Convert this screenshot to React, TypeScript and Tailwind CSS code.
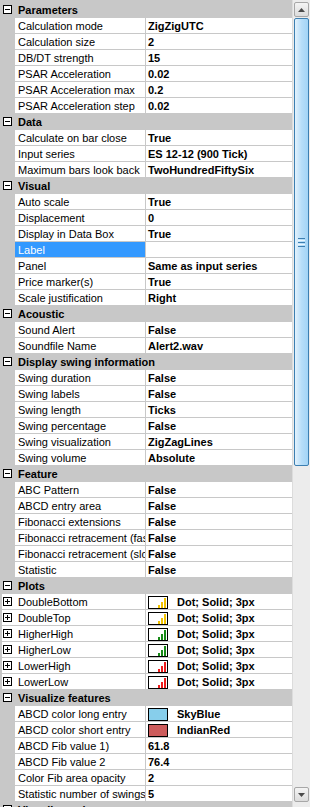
import React from 'react';

type Prop = {
  name: string;
  value?: string;
  plot?: string;
  color?: string;
  selected?: boolean;
};

type Category = { title: string; props: Prop[] };

const categories: Category[] = [
  {
    title: 'Parameters',
    props: [
      { name: 'Calculation mode', value: 'ZigZigUTC' },
      { name: 'Calculation size', value: '2' },
      { name: 'DB/DT strength', value: '15' },
      { name: 'PSAR Acceleration', value: '0.02' },
      { name: 'PSAR Acceleration max', value: '0.2' },
      { name: 'PSAR Acceleration step', value: '0.02' },
    ],
  },
  {
    title: 'Data',
    props: [
      { name: 'Calculate on bar close', value: 'True' },
      { name: 'Input series', value: 'ES 12-12 (900 Tick)' },
      { name: 'Maximum bars look back', value: 'TwoHundredFiftySix' },
    ],
  },
  {
    title: 'Visual',
    props: [
      { name: 'Auto scale', value: 'True' },
      { name: 'Displacement', value: '0' },
      { name: 'Display in Data Box', value: 'True' },
      { name: 'Label', value: '', selected: true },
      { name: 'Panel', value: 'Same as input series' },
      { name: 'Price marker(s)', value: 'True' },
      { name: 'Scale justification', value: 'Right' },
    ],
  },
  {
    title: 'Acoustic',
    props: [
      { name: 'Sound Alert', value: 'False' },
      { name: 'Soundfile Name', value: 'Alert2.wav' },
    ],
  },
  {
    title: 'Display swing information',
    props: [
      { name: 'Swing duration', value: 'False' },
      { name: 'Swing labels', value: 'False' },
      { name: 'Swing length', value: 'Ticks' },
      { name: 'Swing percentage', value: 'False' },
      { name: 'Swing visualization', value: 'ZigZagLines' },
      { name: 'Swing volume', value: 'Absolute' },
    ],
  },
  {
    title: 'Feature',
    props: [
      { name: 'ABC Pattern', value: 'False' },
      { name: 'ABCD entry area', value: 'False' },
      { name: 'Fibonacci extensions', value: 'False' },
      { name: 'Fibonacci retracement (fast)', value: 'False' },
      { name: 'Fibonacci retracement (slow)', value: 'False' },
      { name: 'Statistic', value: 'False' },
    ],
  },
  {
    title: 'Plots',
    props: [
      { name: 'DoubleBottom', value: 'Dot; Solid; 3px', plot: '#f2c200' },
      { name: 'DoubleTop', value: 'Dot; Solid; 3px', plot: '#f2c200' },
      { name: 'HigherHigh', value: 'Dot; Solid; 3px', plot: '#178a17' },
      { name: 'HigherLow', value: 'Dot; Solid; 3px', plot: '#178a17' },
      { name: 'LowerHigh', value: 'Dot; Solid; 3px', plot: '#ee1c1c' },
      { name: 'LowerLow', value: 'Dot; Solid; 3px', plot: '#ee1c1c' },
    ],
  },
  {
    title: 'Visualize features',
    props: [
      { name: 'ABCD color long entry', value: 'SkyBlue', color: '#87ceeb' },
      { name: 'ABCD color short entry', value: 'IndianRed', color: '#cd5c5c' },
      { name: 'ABCD Fib value 1)', value: '61.8' },
      { name: 'ABCD Fib value 2', value: '76.4' },
      { name: 'Color Fib area opacity', value: '2' },
      { name: 'Statistic number of swings', value: '5' },
    ],
  },
  {
    title: 'Visualize swings',
    props: [{ name: 'Swing', value: 'True' }],
  },
];

function Glyph({ plus }: { plus?: boolean }) {
  return (
    <svg width="9" height="9" viewBox="0 0 9 9" className="shrink-0">
      <rect x="0.5" y="0.5" width="8" height="8" fill="#fff" stroke="#000" />
      <line x1="2" y1="4.5" x2="7" y2="4.5" stroke="#000" />
      {plus && <line x1="4.5" y1="2" x2="4.5" y2="7" stroke="#000" />}
    </svg>
  );
}

function PlotSwatch({ color }: { color: string }) {
  return (
    <svg width="20" height="13" viewBox="0 0 20 13" className="shrink-0">
      <rect x="0.5" y="0.5" width="19" height="12" fill="#fff" stroke="#000" />
      <rect x="10" y="9" width="2" height="3" fill={color} />
      <rect x="13" y="6" width="2" height="6" fill={color} />
      <rect x="16" y="2" width="2" height="10" fill={color} />
    </svg>
  );
}

function ColorSwatch({ color }: { color: string }) {
  return <div className="w-[20px] h-[13px] border border-black shrink-0" style={{ backgroundColor: color }} />;
}

function Header({ title }: { title: string }) {
  return (
    <div className="h-[15px] flex items-center shrink-0">
      <div className="w-[15px] flex items-center pl-[3px]">
        <Glyph />
      </div>
      <div className="pl-[3px] font-bold leading-[16px] whitespace-nowrap">{title}</div>
    </div>
  );
}

function Row({ p }: { p: Prop }) {
  return (
    <div className="h-[15px] flex shrink-0">
      {p.plot ? (
        <div className="w-[15px] flex">
          <div className="w-[2px]" />
          <div className="flex-1 bg-white flex items-center pl-px">
            <Glyph plus />
          </div>
        </div>
      ) : (
        <div className="w-[15px]" />
      )}
      <div
        className={`w-[130px] overflow-hidden whitespace-nowrap pl-[3px] leading-[16px] ${
          p.selected ? 'bg-[#3399ff] text-white' : 'bg-white text-black'
        }`}
      >
        {p.name}
      </div>
      <div className="ml-px flex-1 bg-white flex items-start overflow-hidden whitespace-nowrap font-bold">
        {p.plot || p.color ? (
          <div className="flex items-start pl-[2px] pt-[2px] gap-[9px]">
            {p.plot ? <PlotSwatch color={p.plot} /> : <ColorSwatch color={p.color as string} />}
            <span className="leading-[16px] -mt-[2px]">{p.value}</span>
          </div>
        ) : (
          <span className="pl-[2px] leading-[16px]">{p.value}</span>
        )}
      </div>
    </div>
  );
}

function ScrollBar() {
  return (
    <div className="w-[18px] h-full flex flex-col bg-[#ececec] border-l border-[#dcdcdc]">
      <div className="mt-[2px] mx-px h-[15px] border border-[#a7a7a7] rounded-[2px] bg-gradient-to-b from-[#f4f4f4] to-[#dcdcdc] flex items-center justify-center">
        <svg width="7" height="4" viewBox="0 0 7 4">
          <polygon points="3.5,0 7,4 0,4" fill="#4a4a4a" />
        </svg>
      </div>
      <div className="mt-px mx-px h-[448px] border border-[#3c7fb1] rounded-[2px] bg-gradient-to-r from-[#e3f2fd] via-[#b7def9] to-[#a2d4f6] flex items-center justify-center">
        <div className="flex flex-col gap-px">
          <div className="w-[7px] h-px bg-[#3c7fb1]" />
          <div className="w-[7px] h-px bg-[#eaf6fd]" />
          <div className="w-[7px] h-px bg-[#3c7fb1]" />
          <div className="w-[7px] h-px bg-[#eaf6fd]" />
          <div className="w-[7px] h-px bg-[#3c7fb1]" />
        </div>
      </div>
      <div className="flex-1" />
      <div className="mb-[5px] mx-px h-[15px] border border-[#a7a7a7] rounded-[2px] bg-gradient-to-b from-[#f4f4f4] to-[#dcdcdc] flex items-center justify-center">
        <svg width="7" height="4" viewBox="0 0 7 4">
          <polygon points="0,0 7,0 3.5,4" fill="#4a4a4a" />
        </svg>
      </div>
    </div>
  );
}

export default function App() {
  return (
    <div className="w-[310px] h-[807px] overflow-hidden flex bg-[#c8c8c8] text-[11px] text-black font-['Liberation_Sans',Arial,sans-serif]">
      <div className="w-[292px] h-full flex flex-col gap-px pt-[2px] overflow-hidden">
        {categories.map((c) => (
          <React.Fragment key={c.title}>
            <Header title={c.title} />
            {c.props.map((p) => (
              <Row key={p.name} p={p} />
            ))}
          </React.Fragment>
        ))}
      </div>
      <ScrollBar />
    </div>
  );
}
